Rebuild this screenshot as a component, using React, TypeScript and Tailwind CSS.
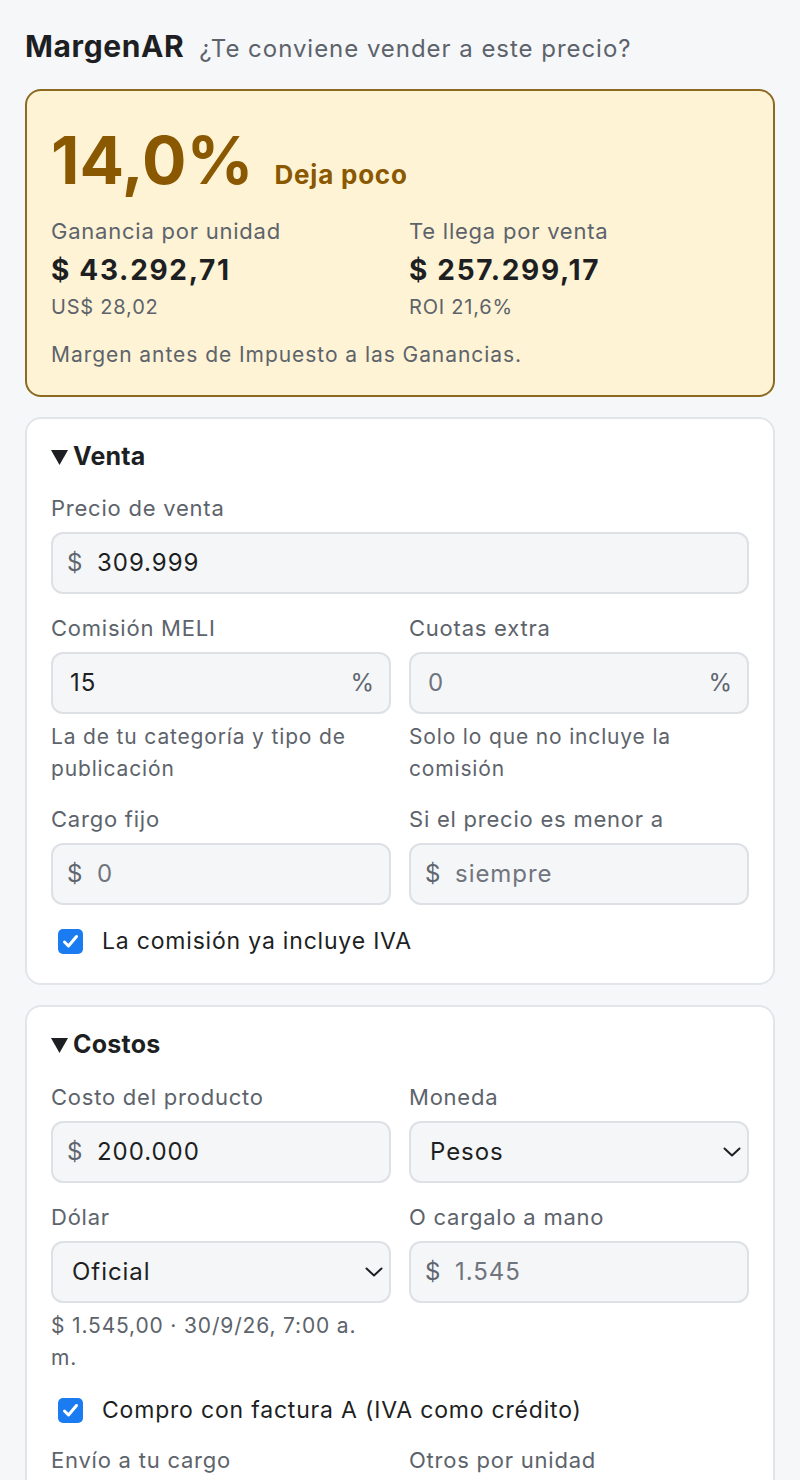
import React from "react";

const FONT = "font-['Inter','Noto_Sans',sans-serif]";

function Label({ children }: { children: React.ReactNode }) {
  return <div className="text-[22px] leading-[32px] tracking-[0.035em] text-[#5d636b]">{children}</div>;
}

function Help({ children }: { children: React.ReactNode }) {
  return <div className="mt-[7px] text-[21px] leading-[32px] tracking-[0.04em] text-[#5d636b]">{children}</div>;
}

function TextBox({
  prefix,
  suffix,
  value,
  placeholder,
}: {
  prefix?: string;
  suffix?: string;
  value?: string;
  placeholder?: string;
}) {
  return (
    <div
      className={`mt-2 flex h-[62px] items-center rounded-[12px] border-2 border-[#dde0e4] bg-[#f5f6f8] text-[24px] tracking-[0.04em] ${
        prefix ? "pl-[14px]" : "pl-[17px]"
      } pr-[14px]`}
    >
      {prefix && <span className="w-[30px] text-[#5f6670]">{prefix}</span>}
      <span className={`flex-1 ${value ? "text-[#1d1f23]" : "text-[#70757d]"}`}>{value ?? placeholder}</span>
      {suffix && <span className="text-[#5f6670]">{suffix}</span>}
    </div>
  );
}

function SelectBox({ value }: { value: string }) {
  return (
    <div className="mt-2 flex h-[62px] items-center rounded-[12px] border-2 border-[#dde0e4] bg-[#f5f6f8] pl-[19px] pr-[6px] text-[24px] tracking-[0.04em] text-[#1d1f23]">
      <span className="flex-1">{value}</span>
      <svg width="18" height="10" viewBox="0 0 18 10" fill="none">
        <polyline points="1.5,1.5 9,8.5 16.5,1.5" stroke="#1d1f23" strokeWidth="2" strokeLinecap="round" strokeLinejoin="round" />
      </svg>
    </div>
  );
}

function Check({ children }: { children: React.ReactNode }) {
  return (
    <div className="flex h-[36px] items-center">
      <span className="ml-[7px] flex h-[25px] w-[25px] items-center justify-center rounded-[5px] bg-[#1b7cf2]">
        <svg width="17" height="15" viewBox="0 0 17 15" fill="none">
          <polyline points="2.5,8 6.5,12 14.5,2.5" stroke="white" strokeWidth="3" strokeLinecap="round" strokeLinejoin="round" />
        </svg>
      </span>
      <span className="ml-[19px] text-[23px] tracking-[0.035em] text-[#1d1f23]">{children}</span>
    </div>
  );
}

function SectionHeader({ children }: { children: React.ReactNode }) {
  return (
    <div className="flex h-[24px] items-center text-[25px] font-bold tracking-[0.01em] text-[#1d1f23]">
      <svg width="17" height="15" viewBox="0 0 17 15" className="mr-[5px]">
        <polygon points="0,0 17,0 8.5,15" fill="#1d1f23" />
      </svg>
      {children}
    </div>
  );
}

function Card({ children }: { children: React.ReactNode }) {
  return (
    <div className="rounded-[16px] border-2 border-[#e2e5e9] bg-white px-[24px] pt-[26px] pb-[24px]">{children}</div>
  );
}

export default function App() {
  return (
    <div className={`${FONT} min-h-[1480px] bg-[#f6f7f9] px-[25px] pt-[28px] pb-[40px]`}>
      <div className="flex items-baseline gap-[15px] leading-[36px]">
        <h1 className="text-[30px] font-bold tracking-[0.02em] text-[#1d1f23]">MargenAR</h1>
        <span className="text-[24px] tracking-[0.04em] text-[#5d636b]">¿Te conviene vender a este precio?</span>
      </div>

      <div className="mt-[22px] rounded-[16px] border-2 border-[#8c6a22] bg-[#fef3d5] px-[24px] pt-[29px] pb-[24px]">
        <div className="flex items-baseline gap-[21px]">
          <span className="text-[66px] font-bold leading-[80px] text-[#8a5800]">14,0%</span>
          <span className="text-[26px] font-bold tracking-[0.03em] text-[#8a5800]">Deja poco</span>
        </div>
        <div className="mt-[15px] grid grid-cols-2 gap-x-[18px]">
          <div>
            <Label>Ganancia por unidad</Label>
            <div className="mt-[5px] text-[28px] font-bold leading-[36px] tracking-[0.06em] text-[#1d1f23]">
              $ 43.292,71
            </div>
            <div className="mt-[5px] text-[20px] leading-[28px] tracking-[0.04em] text-[#5d636b]">US$ 28,02</div>
          </div>
          <div>
            <Label>Te llega por venta</Label>
            <div className="mt-[5px] text-[28px] font-bold leading-[36px] tracking-[0.06em] text-[#1d1f23]">
              $ 257.299,17
            </div>
            <div className="mt-[5px] text-[20px] leading-[28px] tracking-[0.04em] text-[#5d636b]">ROI 21,6%</div>
          </div>
        </div>
        <div className="mt-[18px] text-[21px] leading-[32px] tracking-[0.045em] text-[#5d636b]">
          Margen antes de Impuesto a las Ganancias.
        </div>
      </div>

      <div className="mt-[20px]">
        <Card>
          <SectionHeader>Venta</SectionHeader>
          <div className="mt-[23px]">
            <Label>Precio de venta</Label>
            <TextBox prefix="$" value="309.999" />
          </div>
          <div className="mt-[18px] grid grid-cols-2 gap-x-[18px] gap-y-[18px]">
            <div>
              <Label>Comisión MELI</Label>
              <TextBox value="15" suffix="%" />
              <Help>La de tu categoría y tipo de publicación</Help>
            </div>
            <div>
              <Label>Cuotas extra</Label>
              <TextBox placeholder="0" suffix="%" />
              <Help>Solo lo que no incluye la comisión</Help>
            </div>
            <div>
              <Label>Cargo fijo</Label>
              <TextBox prefix="$" placeholder="0" />
            </div>
            <div>
              <Label>Si el precio es menor a</Label>
              <TextBox prefix="$" placeholder="siempre" />
            </div>
          </div>
          <div className="mt-[18px]">
            <Check>La comisión ya incluye IVA</Check>
          </div>
        </Card>
      </div>

      <div className="mt-[20px]">
        <Card>
          <SectionHeader>Costos</SectionHeader>
          <div className="mt-[24px] grid grid-cols-2 gap-x-[18px] gap-y-[18px]">
            <div>
              <Label>Costo del producto</Label>
              <TextBox prefix="$" value="200.000" />
            </div>
            <div>
              <Label>Moneda</Label>
              <SelectBox value="Pesos" />
            </div>
            <div>
              <Label>Dólar</Label>
              <SelectBox value="Oficial" />
              <Help>
                $ 1.545,00 · 30/9/26, 7:00 a.
                <br />
                m.
              </Help>
            </div>
            <div>
              <Label>O cargalo a mano</Label>
              <TextBox prefix="$" placeholder="1.545" />
            </div>
          </div>
          <div className="mt-[18px]">
            <Check>Compro con factura A (IVA como crédito)</Check>
          </div>
          <div className="mt-[16px] grid grid-cols-2 gap-x-[18px] gap-y-[18px]">
            <div>
              <Label>Envío a tu cargo</Label>
              <TextBox prefix="$" placeholder="0" />
            </div>
            <div>
              <Label>Otros por unidad</Label>
              <TextBox prefix="$" placeholder="0" />
            </div>
          </div>
        </Card>
      </div>
    </div>
  );
}
